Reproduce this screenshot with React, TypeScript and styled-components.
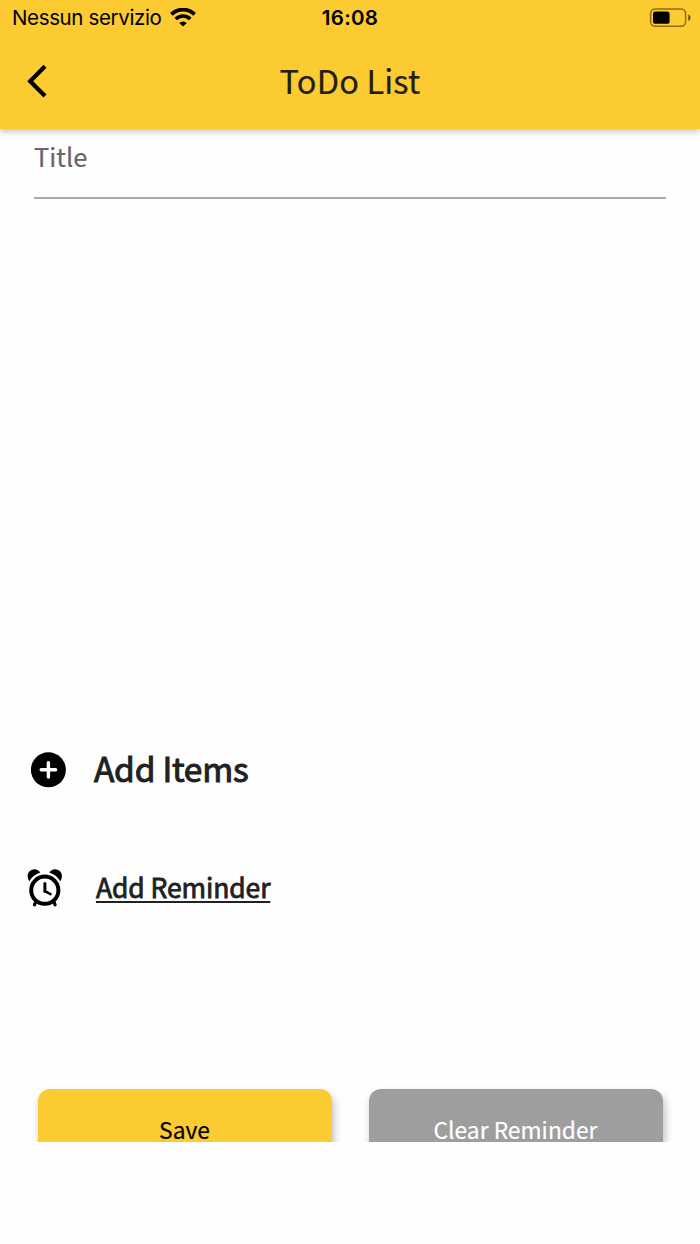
import React from "react";
import styled, { createGlobalStyle } from "styled-components";

const colors = {
  primary: "#fcca31",
  disabled: "#9e9e9e",
  text: "#212121",
  hint: "#666666",
  line: "#a9a9a9",
};

const App: React.FC = () => (
  <Screen>
    <GlobalStyle />
    <Header>
      <StatusBar>
        <Carrier>
          <span>Nessun servizio</span>
          <WifiIcon />
        </Carrier>
        <Clock>16:08</Clock>
        <BatterySlot>
          <BatteryIcon />
        </BatterySlot>
      </StatusBar>
      <TitleBar>
        <BackButton aria-label="Back">
          <BackIcon />
        </BackButton>
        <PageTitle>ToDo List</PageTitle>
      </TitleBar>
    </Header>
    <Content>
      <TitleField>Title</TitleField>
      <Items />
      <AddItems>
        <PlusIcon />
        <AddItemsLabel>Add Items</AddItemsLabel>
      </AddItems>
      <AddReminder>
        <AlarmIcon />
        <AddReminderLabel>Add Reminder</AddReminderLabel>
      </AddReminder>
      <Buttons>
        <Button $background={colors.primary} $color="#000000">
          Save
        </Button>
        <Button $background={colors.disabled} $color="#ffffff">
          Clear Reminder
        </Button>
      </Buttons>
    </Content>
  </Screen>
);

const WifiIcon: React.FC = () => (
  <svg width="26" height="19" viewBox="0 0 26 19" fill="none" stroke="#000">
    <path d="M1.4 6.4a16.4 16.4 0 0 1 23.2 0" strokeWidth="3.8" />
    <path d="M5.7 11.1a10.3 10.3 0 0 1 14.6 0" strokeWidth="3.6" />
    <path
      d="M13 18.6l-3.800-3.600a5.500 5.500 0 0 1 7.600 0z"
      fill="#000"
      stroke="none"
    />
  </svg>
);

const BatteryIcon: React.FC = () => (
  <svg width="42" height="20" viewBox="0 0 42 20">
    <rect
      x="1.6"
      y="1"
      width="35"
      height="17.2"
      rx="4.5"
      fill="none"
      stroke="#000"
      strokeOpacity="0.45"
      strokeWidth="1.5"
    />
    <rect x="4" y="3.4" width="16.6" height="12.4" rx="2.6" />
    <path d="M39.3 6.400c3 1 3 5.600 0 6.600z" fillOpacity="0.6" />
  </svg>
);

const BackIcon: React.FC = () => (
  <svg width="20" height="34" viewBox="0 0 20 34">
    <path
      d="M18 2.2L3.200 17.200 18 32"
      fill="none"
      stroke="#000"
      strokeWidth="4.2"
    />
  </svg>
);

const PlusIcon: React.FC = () => (
  <svg width="36" height="36" viewBox="0 0 36 36">
    <circle cx="18.4" cy="17.8" r="17.5" />
    <path
      d="M18.4 10.6V25M11.2 17.8h14.4"
      stroke="#fff"
      strokeWidth="3.4"
      strokeLinecap="round"
    />
  </svg>
);

const AlarmIcon: React.FC = () => (
  <svg width="36" height="38" viewBox="0 0 36 38">
    <path d="M2.4 12.2C-.9 7.6.5 1 6.6.4c3.1-.3 5.3 1.2 6.7 3.1C8.6 5.1 4.8 8 2.4 12.2z" />
    <path d="M33.2 12.2C36.5 7.6 35.1 1 29 .4c-3.1-.3-5.3 1.2-6.7 3.1 4.7 1.6 8.5 4.5 10.9 8.7z" />
    <g fill="none" stroke="#000" strokeLinecap="round">
      <circle cx="17.8" cy="21.2" r="13.6" strokeWidth="4" />
      <path d="M8.6 33l-1.1 2.8M27 33l1.1 2.8" strokeWidth="3.2" />
      <path d="M17.9 14.6v7.6" strokeWidth="3" />
      <path d="M17.9 22.2l5.6 3" strokeWidth="2.6" />
    </g>
  </svg>
);

const GlobalStyle = createGlobalStyle`
  body {
    margin: 0;
    background-color: #fefefe;
    font-family: "Noto Sans CJK JP", "Noto Sans", sans-serif;
  }

  svg {
    display: block;
    flex-shrink: 0;
  }
`;

const Screen = styled.div`
  display: flex;
  flex-direction: column;
  width: 700px;
  height: 1244px;
  overflow: hidden;
`;

const Header = styled.header`
  flex: none;
  height: 128.5px;
  margin-bottom: -0.5px;
  background-color: ${colors.primary};
  box-shadow: 0 2px 7px rgba(0, 0, 0, 0.28);
  z-index: 1;
`;

const StatusBar = styled.div`
  display: grid;
  grid-template-columns: 1fr auto 1fr;
  align-items: center;
  height: 35px;
  padding: 0 9px 0 12px;
  color: #000000;
  font-family: Inter, sans-serif;
  font-size: 20.5px;
`;

const Carrier = styled.div`
  display: flex;
  align-items: center;
  gap: 8px;
  letter-spacing: -0.36px;
`;

const Clock = styled.span`
  margin-right: 3px;
  font-weight: 600;
  letter-spacing: 0.3px;
`;

const BatterySlot = styled.div`
  display: flex;
  justify-content: flex-end;
`;

const TitleBar = styled.div`
  display: grid;
  grid-template-columns: 80px 1fr 80px;
  align-items: center;
  height: 92px;
`;

const BackButton = styled.button`
  display: flex;
  padding: 0 0 0 27px;
  border: none;
  background: none;
`;

const PageTitle = styled.h1`
  margin: 0 0 3px;
  color: #221d0c;
  font-size: 32.5px;
  font-weight: 400;
  letter-spacing: 0.15px;
  line-height: 40px;
  text-align: center;
  -webkit-text-stroke: 0.2px #221d0c;
`;

const Content = styled.main`
  display: flex;
  flex-direction: column;
  flex: none;
  height: 1014px;
  overflow: hidden;
`;

const TitleField = styled.div`
  flex: none;
  height: 69px;
  margin: 0 34px;
  border-bottom: 2px solid ${colors.line};
  color: ${colors.hint};
  font-size: 25.5px;
  line-height: 55px;
  -webkit-text-stroke: 0.2px ${colors.hint};
`;

const Items = styled.div`
  height: 516px;
  flex: none;
`;

const Row = styled.div`
  display: flex;
  align-items: center;
  flex: none;
  color: ${colors.text};
`;

const AddItems = styled(Row)`
  height: 110px;
  gap: 28px;
  padding-left: 30px;
`;

const AddItemsLabel = styled.span`
  margin-bottom: 4px;
  font-size: 33.5px;
  letter-spacing: -0.25px;
  line-height: 44px;
  -webkit-text-stroke: 1px ${colors.text};
`;

const AddReminder = styled(Row)`
  height: 126px;
  gap: 33px;
  padding-left: 27px;
`;

const AddReminderLabel = styled.span`
  margin-bottom: 2px;
  font-size: 26.5px;
  letter-spacing: -0.1px;
  line-height: 36px;
  -webkit-text-stroke: 0.8px ${colors.text};
  text-decoration: underline;
  text-decoration-thickness: 1.5px;
  text-underline-offset: 3px;
  text-decoration-skip-ink: none;
`;

const Buttons = styled.div`
  display: grid;
  grid-template-columns: 1fr 1fr;
  flex: none;
  gap: 37px;
  padding: 138px 37.5px 0;
`;

const Button = styled.button<{ $background: string; $color: string }>`
  height: 84px;
  padding: 0 0 4px;
  border: none;
  border-radius: 12px;
  background-color: ${({ $background }) => $background};
  box-shadow: 2px 5px 8px rgba(0, 0, 0, 0.25);
  color: ${({ $color }) => $color};
  font-family: inherit;
  font-size: 22.8px;
  -webkit-text-stroke: 0.2px ${({ $color }) => $color};
`;

export default App;
